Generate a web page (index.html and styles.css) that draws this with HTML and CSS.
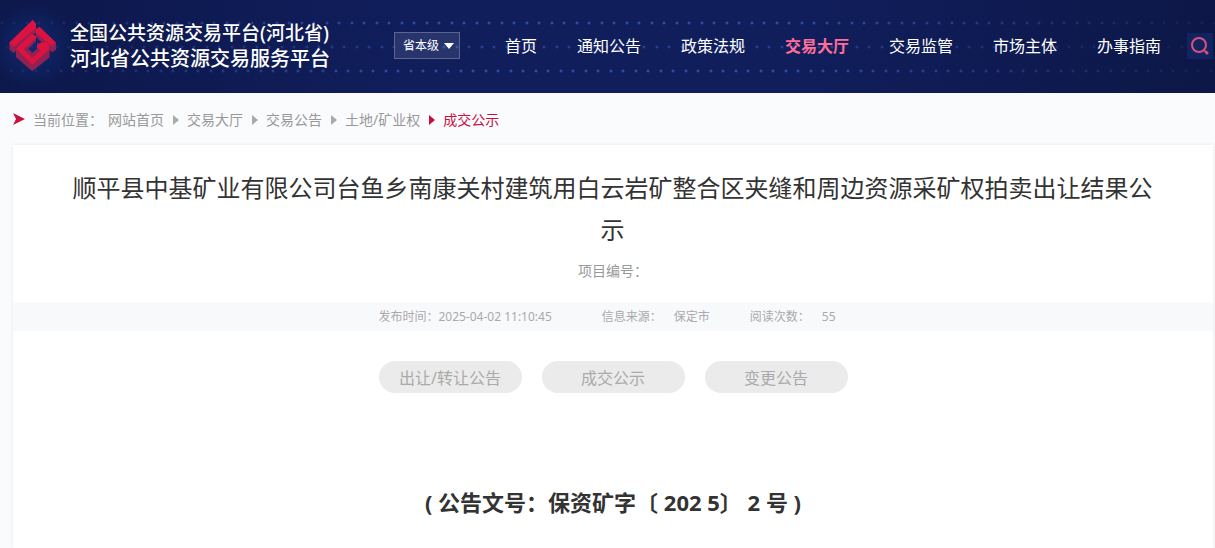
FILE: index.html
```html
<!DOCTYPE html>
<html lang="zh-CN">

<head>
    <meta charset="UTF-8">
    <meta name="viewport" content="width=device-width, initial-scale=1.0">
    <title>河北省公共资源交易服务平台</title>
    <link rel="stylesheet" href="styles.css">
</head>

<body>
    <header class="header">
        <a class="logo" href="#">
            <svg class="logo-mark" viewBox="0 0 168 180" aria-hidden="true">
                <g fill="#8f2153">
                    <path d="M13 80 L83 12 L93 23 L93 50 L32 104 L28 112 L13 101 Z" />
                    <path d="M92 40 L104 33 L153 80 L153 101 L141 109 L92 62 Z" />
                    <path d="M33 98 L79 54 L93 61 L93 76 L70 98 L82 110 L96 98 L96 82 L126 78 L134 84 L134 124 L82 166 L33 124 Z" />
                </g>
                <g fill="#dc1340">
                    <path d="M13 80 L83 12 L93 23 L93 37 L26 93 Z" />
                    <path d="M92 40 L104 33 L153 80 L140 89 L92 50 Z" />
                    <path d="M33 98 L79 54 L93 61 L93 66 L56 100 L82 126 L106 103 L94 92 L108 80 L126 78 L132 84 L132 101 L82 146 Z" />
                </g>
            </svg>
            <span class="logo-text">
                <span class="logo-line">全国公共资源交易平台(河北省)</span>
                <span class="logo-line logo-line-big">河北省公共资源交易服务平台</span>
            </span>
        </a>

        <label class="region">
            <select class="region-select" aria-label="地区">
                <option>省本级</option>
            </select>
            <svg class="region-arrow" viewBox="0 0 10 6" aria-hidden="true"><path d="M0 0H10L5 6Z" /></svg>
        </label>

        <nav class="nav">
            <a href="#">首页</a>
            <a href="#">通知公告</a>
            <a href="#">政策法规</a>
            <a class="active" href="#">交易大厅</a>
            <a href="#">交易监管</a>
            <a href="#">市场主体</a>
            <a href="#">办事指南</a>
        </nav>

        <button class="search" type="button" aria-label="搜索">
            <svg viewBox="0 0 26 26" aria-hidden="true">
                <circle cx="12" cy="12" r="7" />
                <path d="M17 17L18 18" />
                <path class="handle" d="M19 19L20 20" />
            </svg>
        </button>
    </header>

    <nav class="crumbs">
        <svg class="crumbs-mark" viewBox="0 0 12 12" aria-hidden="true"><path d="M0 0L12 6L0 12L3 6Z" /></svg>
        <span class="crumbs-label">当前位置：</span>
        <a href="#">网站首页</a>
        <a href="#">交易大厅</a>
        <a href="#">交易公告</a>
        <a href="#">土地/矿业权</a>
        <a class="current" href="#">成交公示</a>
    </nav>

    <main class="article">
        <h1 class="title">顺平县中基矿业有限公司台鱼乡南康关村建筑用白云岩矿整合区夹缝和周边资源采矿权拍卖出让结果公示</h1>
        <p class="number">项目编号：</p>

        <div class="meta">
            <span class="meta-date">发布时间：2025-04-02 11:10:45</span>
            <span class="meta-pair"><span>信息来源：</span><span>保定市</span></span>
            <span class="meta-pair"><span>阅读次数：</span><span>55</span></span>
        </div>

        <div class="tabs">
            <button class="tab" type="button">出让/转让公告</button>
            <button class="tab" type="button">成交公示</button>
            <button class="tab" type="button">变更公告</button>
        </div>

        <p class="doc-number">( 公告文号：保资矿字〔 202 5〕 2 号 )</p>
    </main>
</body>

</html>
```
FILE: styles.css
```css
* {
    box-sizing: border-box;
}

body {
    margin: 0;
    min-height: 100vh;
    display: flex;
    flex-direction: column;
    font-family: "Noto Sans", "Noto Sans CJK SC", sans-serif;
    font-size: 14px;
    color: #333;
    background-color: #fafbfd;
}

a {
    color: inherit;
    text-decoration: none;
}

button,
select {
    font-family: inherit;
    border: none;
    cursor: pointer;
}

/* header */
.header {
    display: flex;
    align-items: center;
    height: 93px;
    padding: 0 2px 2px 5px;
    color: #fff;
    background-color: #101e5c;
    background-image:
        radial-gradient(circle at 32px 46px, rgba(20, 58, 150, 0.5), transparent 44px),
        linear-gradient(90deg, rgba(11, 21, 67, 0.7), transparent 35%, transparent 65%, rgba(12, 22, 66, 0.8)),
        radial-gradient(circle at 2px 23px, #3a66cc 0, transparent 2px),
        radial-gradient(circle at 14px 23px, #3a66cc 0, transparent 2px),
        radial-gradient(circle at 7px 47px, #2c52b4 0, transparent 2px),
        radial-gradient(circle at 19px 47px, #2c52b4 0, transparent 2px),
        radial-gradient(circle at 11px 71px, #3a66cc 0, transparent 2px),
        radial-gradient(circle at 23px 71px, #3a66cc 0, transparent 2px);
    background-size: auto, auto, 25px 93px, 25px 93px, 25px 93px, 25px 93px, 25px 93px, 25px 93px;
}

.logo {
    display: flex;
    align-items: center;
    gap: 9px;
    margin-right: 64px;
}

.logo-mark {
    width: 56px;
    height: 60px;
}

.logo-text {
    display: flex;
    flex-direction: column;
    font-weight: 500;
    line-height: 26px;
    white-space: nowrap;
}

.logo-line {
    font-size: 19px;
}

.logo-line-big {
    font-size: 20px;
}

.region {
    position: relative;
    margin-right: 45px;
}

.region-select {
    display: block;
    width: 66px;
    height: 27px;
    padding: 0 8px;
    border: 1px solid #5b658f;
    border-radius: 0;
    appearance: none;
    font-size: 12px;
    color: #fff;
    background-color: rgba(255, 255, 255, 0.1);
}

.region-arrow {
    position: absolute;
    top: 11px;
    right: 6px;
    width: 10px;
    height: 6px;
    fill: #fff;
    pointer-events: none;
}

.nav {
    display: flex;
    gap: 40px;
    padding-bottom: 2px;
    font-size: 16px;
    white-space: nowrap;
}

.nav .active {
    color: #ff6d98;
    font-weight: bold;
}

.search {
    width: 26px;
    height: 26px;
    margin-left: auto;
    padding: 0;
    background-color: #12245f;
}

.search svg {
    display: block;
    fill: none;
    stroke: #d9507f;
    stroke-width: 2;
}

.search .handle {
    stroke-width: 3;
    stroke-linecap: round;
}

/* breadcrumbs */
.crumbs {
    display: flex;
    align-items: center;
    height: 52px;
    padding-left: 13px;
    color: #999;
}

.crumbs-mark {
    width: 12px;
    height: 12px;
    margin-right: 8px;
    fill: #c8103e;
}

.crumbs-label {
    margin-right: 5px;
}

.crumbs a + a::before {
    content: "";
    display: inline-block;
    margin: 0 8px 0 9px;
    border: 5px solid transparent;
    border-left: 6px solid #aaa;
    border-right: 0;
}

.crumbs .current {
    color: #c8103e;
}

.crumbs a.current::before {
    border-left-color: #c8103e;
}

/* article */
.article {
    flex: 1;
    margin: 0 2px 0 13px;
    background-color: #fff;
    box-shadow: 0 0 4px rgba(0, 0, 0, 0.08);
}

.title {
    margin: 0;
    padding: 22px 60px 0 59px;
    font-size: 24px;
    font-weight: normal;
    line-height: 42px;
    text-align: center;
}

.number {
    margin: 8px 0 21px;
    line-height: 23px;
    text-align: center;
    color: #999;
}

.meta {
    display: flex;
    justify-content: center;
    gap: 40px;
    height: 28px;
    padding-right: 12px;
    font-size: 12px;
    line-height: 28px;
    color: #aaa;
    background-color: #f8f9fb;
}

.meta-date {
    margin-right: 10px;
}

.meta-pair {
    display: flex;
    gap: 12px;
}

.tabs {
    display: flex;
    justify-content: center;
    gap: 20px;
    padding: 30px 0 90px;
}

.tab {
    width: 143px;
    height: 32px;
    padding: 0;
    border-radius: 16px;
    font-size: 16px;
    color: #aaa;
    background-color: #ebebeb;
}

.doc-number {
    margin: 0;
    font-size: 22px;
    font-weight: bold;
    line-height: 38px;
    text-align: center;
}
```
